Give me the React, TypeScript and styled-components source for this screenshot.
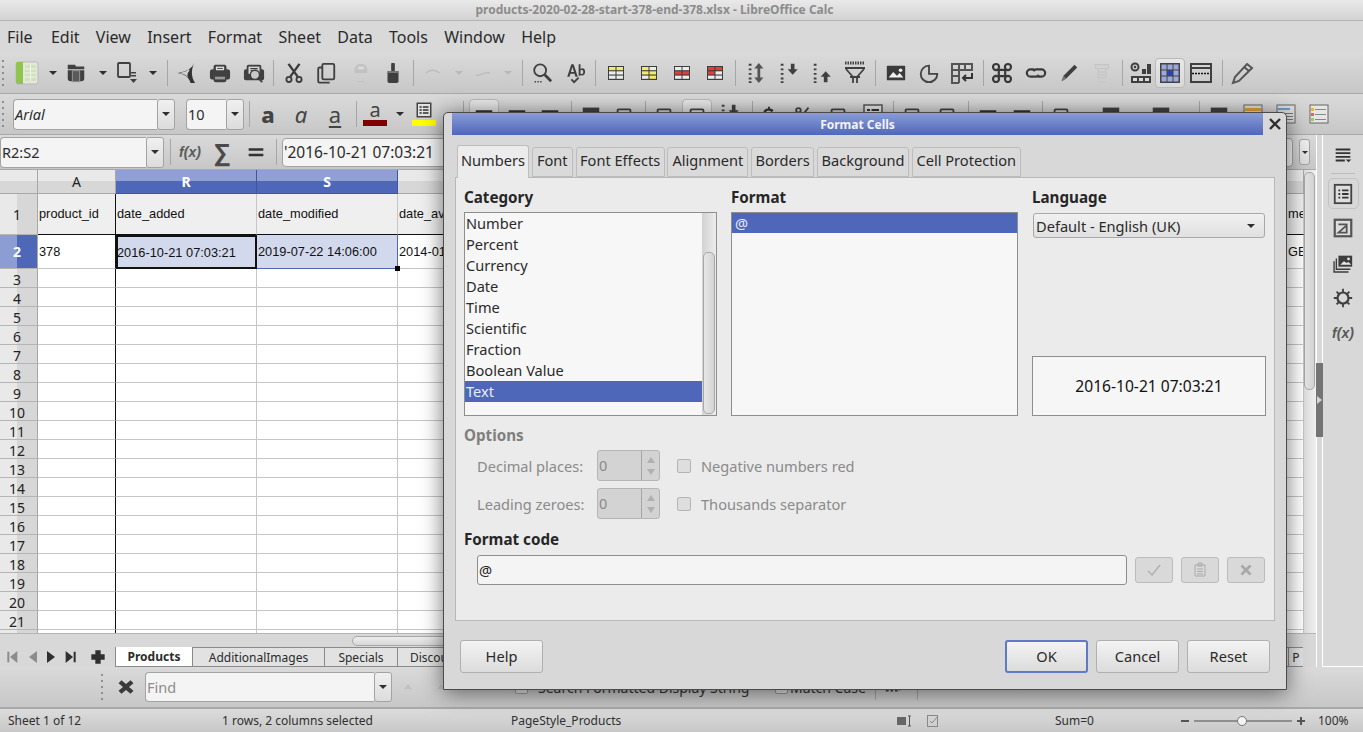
import React from 'react'
import styled, { createGlobalStyle } from 'styled-components'

const GlobalStyle = createGlobalStyle`
  html, body { margin: 0; padding: 0; background: #d8d8d8; }
  body { font-family: "Noto Sans", "Open Sans", sans-serif; color: #2b2b2b; overflow: hidden; }
  * { box-sizing: border-box; }
`

const Window = styled.div`
  position: relative;
  width: 1363px;
  height: 732px;
  display: flex;
  flex-direction: column;
  overflow: hidden;
`
const TitleBar = styled.div`
  height: 21px;
  flex: none;
  background: linear-gradient(#e9e9e9, #d3d3d3);
  border-bottom: 1px solid #b4b4b4;
  color: #8c8c8c;
  font-size: 12px;
  font-weight: 700;
  line-height: 20px;
  text-align: center;
  padding-right: 54px;
`
const MenuBar = styled.div`
  height: 32px;
  flex: none;
  display: flex;
  gap: 16.3px;
  padding-left: 7px;
  align-items: center;
  background: #d9d9d9;
  font-size: 16px;
  color: #2a2a2a;
  span:first-child { margin-right: 2px; }
`
const ToolRow = styled.div<{ $h: number; $start?: number }>`
  height: ${p => p.$h}px;
  flex: none;
  display: flex;
  align-items: center;
  padding-left: ${p => p.$start ?? 0}px;
  background: linear-gradient(#dadada, #c7c7c7);
  border-bottom: 1px solid #a9a9a9;
`
const Slot = styled.div<{ $w: number }>`
  width: ${p => p.$w}px;
  flex: none;
  display: flex;
  align-items: center;
  position: relative;
`
const IconBox = styled.div`
  width: 24px;
  height: 24px;
  flex: none;
  display: flex;
  align-items: center;
  justify-content: center;
`
const Pressed = styled(IconBox)`
  width: 30px;
  height: 30px;
  margin: 0 -3px;
  flex: none;
  border: 1px solid #b9b9b9;
  border-radius: 4px;
  background: linear-gradient(#e8e8e8, #d9d9d9);
`
const Sep = styled.div`
  width: 1px;
  height: 26px;
  flex: none;
  margin-left: 12px;
  background: #a6a6a6;
`
const GripDots = styled.div`
  width: 2px;
  height: 26px;
  flex: none;
  margin-left: 2px;
  background: repeating-linear-gradient(#8f8f8f 0 2px, transparent 2px 6px);
`
const GlyphA = styled.span<{ $bold?: boolean; $italic?: boolean; $under?: boolean }>`
  font-size: 22px;
  line-height: 22px;
  color: #444;
  font-weight: ${p => (p.$bold ? 800 : 400)};
  font-style: ${p => (p.$italic ? 'italic' : 'normal')};
  text-decoration: ${p => (p.$under ? 'underline' : 'none')};
  text-underline-offset: 3px;
`
const ColorChip = styled.div`
  display: flex;
  flex-direction: column;
  align-items: center;
  width: 24px;
  height: 26px;
  line-height: 18px;
  font-size: 20px;
  color: #444;
`
const ChipBar = styled.i<{ $c: string }>`
  display: block;
  width: 24px;
  height: 6px;
  margin-top: 1px;
  flex: none;
  background: ${p => p.$c};
`
const Combo = styled.div<{ $w: number; $h?: number }>`
  width: ${p => p.$w}px;
  height: ${p => p.$h ?? 31}px;
  flex: none;
  display: flex;
`
const ComboInput = styled.div<{ $italic?: boolean; $muted?: boolean; $fs?: number }>`
  flex: 1;
  min-width: 0;
  background: #f4f4f4;
  border: 1px solid #a3a3a3;
  border-right: none;
  border-radius: 4px 0 0 4px;
  padding-left: 1px;
  display: flex;
  align-items: center;
  font-size: ${p => p.$fs ?? 14.5}px;
  font-style: ${p => (p.$italic ? 'italic' : 'normal')};
  color: ${p => (p.$muted ? '#8d8d8d' : '#2b2b2b')};
  white-space: nowrap;
  overflow: hidden;
`
const FormulaInput = styled(ComboInput)`
  border-right: 1px solid #a3a3a3;
  border-radius: 4px;
`
const ComboButton = styled.div`
  width: 18px;
  flex: none;
  background: linear-gradient(#f0f0f0, #dcdcdc);
  border: 1px solid #a3a3a3;
  border-radius: 3px;
  display: flex;
  align-items: center;
  justify-content: center;
`
const FormulaDrop = styled(ComboButton)`
  width: 11px;
  height: 26px;
`
const Caret = styled.i<{ $c?: string; $s?: number }>`
  display: block;
  width: 0;
  height: 0;
  flex: none;
  border-left: ${p => p.$s ?? 4}px solid transparent;
  border-right: ${p => p.$s ?? 4}px solid transparent;
  border-top: ${p => p.$s ?? 4}px solid ${p => p.$c ?? '#2e2e2e'};
`
const Workspace = styled.div`
  flex: none;
  height: 532px;
  display: flex;
`
const Main = styled.div`
  width: 1316px;
  flex: none;
  display: flex;
  flex-direction: column;
`
const FxText = styled.span`
  font-size: 14px;
  font-style: italic;
  font-weight: 700;
  color: #5a5a5a;
  font-family: "Liberation Sans", Arial, sans-serif;
  white-space: nowrap;
`
const SigmaGlyph = styled.span`
  font-size: 24px;
  font-weight: 700;
  color: #4a4a4a;
  line-height: 24px;
`
const GridWrap = styled.div`
  height: 463px;
  flex: none;
  display: flex;
`
const Sheet = styled.div`
  width: 1304px;
  flex: none;
  overflow: hidden;
  position: relative;
  background: #fff;
`
const GridRow = styled.div<{ $h: number }>`
  display: flex;
  height: ${p => p.$h}px;
`
const Corner = styled.div`
  width: 38px;
  flex: none;
  background: linear-gradient(#e9e9e9 11px, #d7d7d7 11px);
  border-right: 1px solid #a8a8a8;
  border-bottom: 1px solid #a8a8a8;
`
const ColHead = styled.div<{ $w: number; $on?: boolean }>`
  width: ${p => p.$w}px;
  flex: none;
  display: flex;
  align-items: center;
  justify-content: center;
  font-size: 14px;
  font-weight: ${p => (p.$on ? 700 : 400)};
  color: ${p => (p.$on ? '#fff' : '#222')};
  background: ${p =>
    p.$on
      ? 'linear-gradient(#909fd5 11px, #4f67b9 11px)'
      : 'linear-gradient(#e9e9e9 11px, #d7d7d7 11px)'};
  border-right: 1px solid ${p => (p.$on ? '#3f56a5' : '#a8a8a8')};
  border-bottom: 1px solid ${p => (p.$on ? '#3f56a5' : '#a8a8a8')};
`
const RowHead = styled.div<{ $on?: boolean; $low?: boolean }>`
  width: 38px;
  flex: none;
  display: flex;
  align-items: center;
  justify-content: center;
  font-size: 14px;
  padding-right: 3px;
  padding-top: ${p => (p.$low ? 2 : 0)}px;
  font-weight: ${p => (p.$on ? 700 : 400)};
  color: ${p => (p.$on ? '#fff' : '#222')};
  background: ${p =>
    p.$on
      ? 'linear-gradient(90deg, #8c9dd4 17px, #4f67b9 17px)'
      : 'linear-gradient(90deg, #e9e9e9 17px, #d7d7d7 17px)'};
  border-right: 1px solid #a8a8a8;
  border-bottom: 1px solid #b5b5b5;
`
const Cell = styled.div<{ $w: number; $head?: boolean; $sel?: boolean; $frozen?: boolean; $under?: boolean }>`
  width: ${p => p.$w}px;
  flex: none;
  display: flex;
  align-items: center;
  padding-left: 1px;
  padding-bottom: ${p => (p.$head ? 2 : 0)}px;
  font-family: "Liberation Sans", Arial, sans-serif;
  font-size: 12.8px;
  color: #111;
  white-space: nowrap;
  overflow: hidden;
  background: ${p => (p.$head ? '#efefef' : p.$sel ? '#d3d9ec' : '#fff')};
  border-right: 1px solid ${p => (p.$frozen ? '#111' : '#c6c6c6')};
  border-bottom: 1px solid ${p => (p.$under ? '#111' : '#c6c6c6')};
`
const ActiveCell = styled(Cell)`
  border: 2px solid #111;
  padding-left: 0;
  text-indent: -1px;
`
const BlueCell = styled(Cell)`
  border-right: 1px solid #4f67b9;
  border-bottom: 1px solid #4f67b9;
`
const FillHandle = styled.i`
  position: absolute;
  left: 395px;
  top: 96px;
  width: 5px;
  height: 5px;
  background: #000;
`
const VScroll = styled.div`
  width: 12px;
  flex: none;
  background: linear-gradient(90deg, #dedede, #efefef);
  padding: 2px 1px 0 0;
`
const VThumb = styled.div`
  height: 218px;
  border: 1px solid #a8a8a8;
  border-radius: 5px;
  background: linear-gradient(90deg, #e6e6e6, #d2d2d2);
`
const HScroll = styled.div`
  height: 14px;
  flex: none;
  padding: 2px 0 2px 352px;
  background: #d8d8d8;
  border-top: 1px solid #b5b5b5;
`
const HThumb = styled.div`
  height: 10px;
  width: 900px;
  border: 1px solid #a8a8a8;
  border-radius: 5px;
  background: linear-gradient(#ececec, #d8d8d8);
`
const TabsRow = styled.div`
  height: 20px;
  flex: none;
  display: flex;
  background: #d8d8d8;
`
const NavArea = styled.div`
  width: 115px;
  flex: none;
  display: flex;
  align-items: center;
`
const NavSlot = styled.div<{ $w: number }>`
  width: ${p => p.$w}px;
  flex: none;
  display: flex;
  justify-content: center;
`
const SheetTab = styled.div<{ $w: number; $on?: boolean; $left?: number }>`
  width: ${p => p.$w}px;
  flex: none;
  display: flex;
  align-items: center;
  justify-content: ${p => (p.$left ? 'flex-start' : 'center')};
  padding-left: ${p => p.$left ?? 0}px;
  overflow: hidden;
  white-space: nowrap;
  font-size: 12px;
  font-weight: ${p => (p.$on ? 700 : 400)};
  background: ${p => (p.$on ? '#fff' : '#e2e2e2')};
  border-left: 1px solid #8a8a8a;
  border-top: ${p => (p.$on ? 'none' : '1px solid #8a8a8a')};
  border-bottom: 1px solid #8a8a8a;
  color: #2b2b2b;
`
const Strip = styled.div`
  width: 7px;
  flex: none;
  display: flex;
  flex-direction: column;
  background: #d8d8d8;
  border-left: 1px solid #fff;
  border-right: 1px solid #fff;
  padding-top: 228px;
`
const Handle = styled.div`
  width: 7px;
  margin-left: -1px;
  height: 74px;
  background: #747474;
  display: flex;
  align-items: center;
`
const HandleArrow = styled.i`
  width: 0;
  height: 0;
  border-top: 4px solid transparent;
  border-bottom: 4px solid transparent;
  border-left: 5px solid #d4d4d4;
  margin-left: 1px;
`
const SideBar = styled.div`
  width: 40px;
  flex: none;
  background: #d8d8d8;
  border-bottom: 1px solid #fff;
  display: flex;
  flex-direction: column;
  align-items: center;
  padding-top: 8px;
`
const SideItem = styled.div<{ $active?: boolean }>`
  width: 31px;
  height: ${p => (p.$active ? 31 : 35)}px;
  margin-bottom: ${p => (p.$active ? 1 : 0)}px;
  display: flex;
  align-items: center;
  justify-content: center;
  border: 1px solid ${p => (p.$active ? '#c3c3c3' : 'transparent')};
  border-radius: 5px;
`
const SideRule = styled.div`
  width: 24px;
  height: 1px;
  background: #bdbdbd;
  margin: 6px 0 4px;
`
const FindCheck = styled.i`
  width: 13px;
  height: 13px;
  display: block;
  background: #e6e6e6;
  border: 1px solid #9c9c9c;
  border-radius: 2px;
`
const FindLabel = styled.span`
  font-size: 14px;
  color: #333;
  white-space: nowrap;
`
const StatusBar = styled.div`
  flex: 1;
  display: flex;
  align-items: center;
  padding-left: 8px;
  background: linear-gradient(#dcdcdc, #c8c8c8);
  border-top: 1px solid #a9a9a9;
  font-size: 12px;
  color: #303030;
  white-space: nowrap;
`
const StatusCell = styled.div<{ $w: number }>`
  width: ${p => p.$w}px;
  flex: none;
  display: flex;
  align-items: center;
`
const ZoomTrack = styled.div`
  position: relative;
  width: 98px;
  height: 2px;
  background: #8f8f8f;
`
const ZoomThumb = styled.i`
  position: absolute;
  left: 43px;
  top: -4px;
  width: 10px;
  height: 10px;
  border-radius: 50%;
  background: #f4f4f4;
  border: 1px solid #777;
`

/* dialog */
const Dialog = styled.div`
  position: absolute;
  left: 443px;
  top: 112px;
  width: 844px;
  height: 578px;
  background: #d8d8d8;
  border: 1px solid #4b4b4b;
  border-radius: 5px 5px 0 0;
  box-shadow: 0 3px 22px rgba(0, 0, 0, 0.55);
  display: flex;
  flex-direction: column;
  font-size: 14.6px;
  color: #2a2a2a;
`
const DlgTitleRow = styled.div`
  height: 22px;
  flex: none;
  display: flex;
  padding-left: 8px;
`
const DlgTitle = styled.div`
  flex: 1;
  background: linear-gradient(#8a9cd8, #4f67b9);
  color: #f3f3f3;
  font-size: 12px;
  font-weight: 700;
  line-height: 23px;
  text-align: center;
`
const DlgClose = styled.div`
  width: 23px;
  flex: none;
  display: flex;
  align-items: center;
  justify-content: center;
`
const TabStrip = styled.div`
  display: flex;
  gap: 2.8px;
  align-items: flex-end;
  height: 42px;
  flex: none;
  padding-left: 13px;
`
const DlgTab = styled.div<{ $w: number; $on?: boolean }>`
  width: ${p => p.$w}px;
  height: ${p => (p.$on ? 33 : 30)}px;
  margin-bottom: ${p => (p.$on ? -1 : 0)}px;
  padding-bottom: ${p => (p.$on ? 5 : 4)}px;
  flex: none;
  display: flex;
  align-items: center;
  justify-content: center;
  background: ${p => (p.$on ? '#ececec' : '#dadada')};
  border: 1px solid #bdbdbd;
  border-bottom: ${p => (p.$on ? 'none' : '1px solid #bdbdbd')};
  border-radius: 3px 3px 0 0;
  position: relative;
  z-index: ${p => (p.$on ? 1 : 0)};
  white-space: nowrap;
`
const Panel = styled.div`
  width: 820px;
  height: 444px;
  flex: none;
  margin-left: 11px;
  padding: 8px 8px 0;
  background: #ebebeb;
  border: 1px solid #b8b8b8;
`
const ThreeCols = styled.div`
  display: grid;
  grid-template-columns: 253px 287px 234px;
  column-gap: 14px;
  height: 230px;
`
const Col = styled.div`
  display: flex;
  flex-direction: column;
  min-height: 0;
`
const Label = styled.div<{ $muted?: boolean }>`
  font-size: 15.2px;
  font-weight: 700;
  line-height: 20px;
  height: 26px;
  padding-top: 1px;
  flex: none;
  color: ${p => (p.$muted ? '#7f7f7f' : '#262626')};
`
const ListBox = styled.div`
  height: 204px;
  flex: none;
  display: flex;
  background: #f7f7f7;
  border: 1px solid #8e8e8e;
`
const ListItems = styled.div`
  flex: 1;
  min-width: 0;
`
const ListItem = styled.div<{ $on?: boolean; $h?: number }>`
  height: ${p => p.$h ?? 21}px;
  line-height: ${p => p.$h ?? 21}px;
  padding-left: 1px;
  background: ${p => (p.$on ? '#4f67b9' : 'transparent')};
  color: ${p => (p.$on ? '#e8ecf8' : '#2a2a2a')};
`
const FormatItem = styled(ListItem)`
  padding-left: 3px;
`
const ListTrack = styled.div`
  width: 14px;
  flex: none;
  padding: 39px 1px 1px 1px;
  background: linear-gradient(90deg, #d2d2d2, #ececec);
`
const ListThumb = styled.div`
  height: 162px;
  border: 1px solid #a8a8a8;
  border-radius: 5px;
  background: linear-gradient(90deg, #e6e6e6, #d4d4d4);
`
const LangSelect = styled.div`
  height: 25px;
  flex: none;
  margin: 1px 0 0 1px;
  width: 232px;
  display: flex;
  align-items: center;
  justify-content: space-between;
  padding: 0 9px 0 2px;
  border: 1px solid #a8a8a8;
  border-radius: 3px;
  background: linear-gradient(#f1f1f1, #e0e0e0);
`
const Preview = styled.div`
  height: 60px;
  flex: none;
  margin-top: 118px;
  display: flex;
  align-items: center;
  justify-content: center;
  font-size: 15.6px;
  background: #f6f6f6;
  border: 1px solid #8e8e8e;
  color: #111;
`
const OptionsLabel = styled(Label)`
  margin-top: 8px;
  height: 26px;
`
const OptionRow = styled.div`
  display: flex;
  align-items: center;
  height: 31px;
  margin-bottom: 7px;
  padding-left: 13px;
  color: #8a8a8a;
`
const OptionName = styled.div`
  width: 120px;
  flex: none;
`
const Spin = styled.div`
  width: 63px;
  height: 31px;
  flex: none;
  display: flex;
  background: #d3d3d3;
  border: 1px solid #b5b5b5;
  border-radius: 3px;
  font-size: 14.5px;
  align-items: stretch;
`
const SpinValue = styled.div`
  flex: 1;
  padding-left: 1px;
  line-height: 28px;
`
const SpinArrows = styled.div`
  width: 18px;
  flex: none;
  border-left: 1px solid #a5a5a5;
  display: flex;
  flex-direction: column;
  align-items: center;
  justify-content: center;
  gap: 6px;
`
const SpinUp = styled.i`
  width: 0;
  height: 0;
  border-left: 4px solid transparent;
  border-right: 4px solid transparent;
  border-bottom: 6px solid #b0b0b0;
`
const SpinDown = styled(SpinUp)`
  transform: rotate(180deg);
`
const CheckBox = styled.i`
  width: 14px;
  height: 14px;
  flex: none;
  margin: 0 10px 0 17px;
  background: #dedede;
  border: 1px solid #b4b4b4;
  border-radius: 2px;
`
const CodeLabel = styled(Label)`
  margin-top: 9px;
  height: 27px;
`
const CodeRow = styled.div`
  display: flex;
  align-items: center;
  gap: 8px;
  padding-left: 13px;
`
const CodeInput = styled.div`
  width: 650px;
  height: 30px;
  flex: none;
  display: flex;
  align-items: center;
  padding-left: 1px;
  background: #f4f4f4;
  border: 1px solid #8e8e8e;
  border-radius: 3px;
  color: #222;
`
const MiniButton = styled.div`
  width: 38px;
  height: 26px;
  flex: none;
  display: flex;
  align-items: center;
  justify-content: center;
  background: #d9d9d9;
  border: 1px solid #bcbcbc;
  border-radius: 3px;
`
const Footer = styled.div`
  flex: 1;
  display: flex;
  justify-content: space-between;
  padding: 19px 16px 0 16px;
`
const FootGroup = styled.div`
  display: flex;
  gap: 8px;
`
const FootButton = styled.div<{ $def?: boolean }>`
  width: 83px;
  height: 33px;
  padding-bottom: 1px;
  display: flex;
  align-items: center;
  justify-content: center;
  border: ${p => (p.$def ? '2px solid #5f78c8' : '1px solid #b0b0b0')};
  border-radius: 3px;
  background: linear-gradient(#f3f3f3, #dcdcdc);
`

const Svg: React.FC<{ children: React.ReactNode; c?: string; size?: number }> = ({ children, c = '#404040', size = 22 }) => (
  <svg width={size} height={size} viewBox="0 0 24 24" fill={c} stroke="none">{children}</svg>
)

const Tbl: React.FC<{ cells: string[] }> = ({ cells }) => (
  <svg width="24" height="24" viewBox="0 0 24 24">
    <rect x="4" y="5" width="16" height="14" fill="#3d3d3d" />
    {[0, 1, 2, 3, 4, 5].map(i => (
      <rect key={i} x={i % 2 ? 12.500 : 5} y={6 + Math.floor(i / 2) * 4.300} width="6.500" height="3.200" fill={cells[i] || '#ececec'} />
    ))}
  </svg>
)

const dim = '#b9b9b9'
const icons: Record<string, React.ReactNode> = {
  doc: (
    <svg width="24" height="24" viewBox="0 0 24 24">
      <rect x="1" y="1" width="22" height="22" rx="2" fill="#e4e6df" stroke="#b9b9b9" />
      <path d="M1 3a2 2 0 0 1 2-2h5v22H3a2 2 0 0 1-2-2z" fill="#8fc44f" />
      <path d="M10 4h11v16H10z" fill="#cfe3b4" />
      <path d="M10 8h11M10 12h11M10 16h11M15.500 4v16" stroke="#f2f2f2" />
    </svg>
  ),
  open: (
    <Svg>
      <path d="M3 3h8l1 2h9v3H3z" />
      <path d="M3 9h18v9a3 3 0 0 1-3 3H6a3 3 0 0 1-3-3z" />
      <rect x="7.500" y="9" width="9" height="13" fill="#9a9a9a" />
      <rect x="8.500" y="10" width="7" height="11" fill="#5a5a5a" />
    </Svg>
  ),
  save: (
    <svg width="22" height="24" viewBox="0 0 22 24" fill="#404040">
      <rect x="2" y="2" width="12" height="14" rx="1" fill="none" stroke="#404040" strokeWidth="1.800" />
      <path d="M15 11h5v1.500h-5zM15 14h5v1.500h-5zM14 18h7l-3.500 4z" />
    </svg>
  ),
  pdf: (
    <Svg c="#333">
      <path d="M21 1C18 7 14 10 3 12c7 1 12 4 14 11h5c-4-6-5-14-1-22z" />
      <path d="M5 12c5-1 8-2 10-4l1 1c-2 3-3 4-2 8-2-3-5-4-9-5z" fill="#d2d2d2" />
    </Svg>
  ),
  print: (
    <Svg>
      <path d="M7 3h10a2 2 0 0 1 2 2v3h1a3 3 0 0 1 3 3v6a2 2 0 0 1-2 2h-2v1a2 2 0 0 1-2 2H7a2 2 0 0 1-2-2v-1H3a2 2 0 0 1-2-2v-6a3 3 0 0 1 3-3h1V5a2 2 0 0 1 2-2z" />
      <path d="M7.500 5h9v4h-9z" fill="#ddd" />
      <path d="M9 6.500h6v1H9z" />
      <path d="M6.500 16h11v3h-11z" fill="#999" />
    </Svg>
  ),
  preview: (
    <Svg>
      <path d="M6 3h12a2 2 0 0 1 2 2v3h1a2 2 0 0 1 2 2v8a2 2 0 0 1-2 2H3a2 2 0 0 1-2-2v-8a2 2 0 0 1 2-2h1V5a2 2 0 0 1 2-2z" />
      <path d="M6 5h12v8H6z" fill="#d5d5d5" />
      <path d="M8 6.500h8v1H8zM8 8.500h8v1H8z" />
      <circle cx="13" cy="14" r="5" fill="#c9c9c9" stroke="#404040" strokeWidth="1.500" />
      <path d="M16 17l5 5" stroke="#404040" strokeWidth="2" />
    </Svg>
  ),
  cut: (
    <svg width="22" height="22" viewBox="0 0 24 24" fill="none" stroke="#3c3c3c" strokeWidth="2.600">
      <path d="M6 2l10 14M18 2L8 16" />
      <circle cx="6.500" cy="19" r="2.800" strokeWidth="2" />
      <circle cx="17.500" cy="19" r="2.800" strokeWidth="2" />
    </svg>
  ),
  copy: (
    <svg width="22" height="22" viewBox="0 0 24 24" fill="none" stroke="#404040" strokeWidth="2">
      <rect x="8" y="2" width="13" height="17" rx="1.500" />
      <path d="M8 6H5a1.500 1.500 0 0 0-1.500 1.500V21a1.500 1.500 0 0 0 1.500 1.500h11" />
    </svg>
  ),
  paste: (
    <Svg c="#c2c2c2">
      <path d="M5 9c0-4 3-7 7-7s7 3 7 7v3H5z" />
      <path d="M9 5h6v3H9z" fill="#dcdcdc" />
      <path d="M8 21h8v1H8z" />
    </Svg>
  ),
  brush: (
    <Svg c="#3f3f3f">
      <rect x="10" y="1" width="4" height="9" rx="1" />
      <path d="M6 10h12v11a2 2 0 0 1-2 2H8a2 2 0 0 1-2-2z" />
      <rect x="6" y="10" width="12" height="2" fill="#777" />
    </Svg>
  ),
  undo: (
    <svg width="24" height="24" viewBox="0 0 24 24" fill="none" stroke="#bdbdbd" strokeWidth="1.500"><path d="M4 12c4-4 8-4 14 0" /></svg>
  ),
  redo: (
    <svg width="24" height="24" viewBox="0 0 24 24" fill="none" stroke="#bdbdbd" strokeWidth="1.500"><path d="M4 14c4 2 8-4 14-2" /></svg>
  ),
  search: (
    <svg width="22" height="22" viewBox="0 0 24 24" fill="none" stroke="#3f3f3f" strokeWidth="2">
      <circle cx="10" cy="9" r="6.500" />
      <path d="M15 14l7 7" strokeWidth="3" />
      <path d="M4 21.500h8" strokeDasharray="1.500 1.500" strokeWidth="1.500" />
    </svg>
  ),
  spell: (
    <svg width="22" height="22" viewBox="0 0 24 24">
      <path d="M6 16h-2.500L8 2.500h2.500L15 16h-2.500l-1-3.200H7zM7.600 11h3.300L9.200 5.500z" fill="#3f3f3f" />
      <path d="M16 2.500h2v5c2.500-1.500 5-.5 5 3s-2.500 5-5 3.800V15h-2zM18 9.200v3.500c1.500 1 3 .5 3-1.800s-1.500-2.700-3-1.700z" fill="#3f3f3f" />
      <path d="M8 19l3 3 5-5" fill="none" stroke="#3f3f3f" strokeWidth="2" />
    </svg>
  ),
  t1: <Tbl cells={['#f4ea6a', '#f4ea6a', '', '', '', '']} />,
  t2: <Tbl cells={['#f4ea6a', '', '#f4ea6a', '#f4ea6a', '', '#f4ea6a']} />,
  t3: <Tbl cells={['', '', '#e43b3b', '#e43b3b', '', '']} />,
  t4: <Tbl cells={['#e43b3b', '#e43b3b', '#e43b3b', '', '', '']} />,
  rowH: (
    <Svg>
      <path d="M14 1l5 6h-3.500v10H19l-5 6-5-6h3.500V7H9z" fill="#555" />
      <path d="M3 2h3v2H3zM3 7h3v2H3zM3 12h3v2H3zM3 17h3v2H3zM3 21h3v2H3z" />
    </Svg>
  ),
  rowDown: (
    <Svg>
      <path d="M14 2h4v6h3.500L16 14l-5.500-6H14z" />
      <path d="M3 2h3v2H3zM3 7h3v2H3zM3 12h3v2H3zM3 17h3v2H3zM3 21h3v2H3z" />
    </Svg>
  ),
  rowUp: (
    <Svg>
      <path d="M18 22h-4v-6h-3.500L16 10l5.500 6H18z" />
      <path d="M3 2h3v2H3zM3 7h3v2H3zM3 12h3v2H3zM3 17h3v2H3zM3 21h3v2H3z" />
    </Svg>
  ),
  filter: (
    <svg width="24" height="24" viewBox="0 0 24 24" fill="none" stroke="#404040" strokeWidth="1.800">
      <path d="M2 2h20" strokeDasharray="1.500 1" strokeWidth="3" />
      <path d="M2 7h20M3 8l7 8v6M21 8l-7 8v6M7 16h10" />
    </svg>
  ),
  image: (
    <Svg c="#3a3a3a">
      <rect x="2" y="4" width="20" height="16" rx="1" />
      <path d="M4 17l5-6 4 4 3-3 4 5z" fill="#f0f0f0" />
      <circle cx="17" cy="9" r="2" fill="#f0f0f0" />
    </Svg>
  ),
  chart: (
    <svg width="22" height="22" viewBox="0 0 24 24" fill="none" stroke="#444" strokeWidth="2">
      <path d="M12 4a9 9 0 1 0 9 9h-9V4z" />
    </svg>
  ),
  pivot: (
    <svg width="24" height="24" viewBox="0 0 24 24" fill="none" stroke="#555" strokeWidth="2">
      <path d="M2 3h20v6H2zM2 3v19h7M9 3v19M15 3v6M2 9h20M2 15h7" />
      <path d="M22 12v5h-8M16 14l-3 3 3 3" stroke="#333" />
    </svg>
  ),
  cmd: (
    <svg width="22" height="22" viewBox="0 0 24 24" fill="none" stroke="#383838" strokeWidth="2.400">
      <circle cx="5.500" cy="5.500" r="3.300" /><circle cx="18.500" cy="5.500" r="3.300" />
      <circle cx="5.500" cy="18.500" r="3.300" /><circle cx="18.500" cy="18.500" r="3.300" />
      <path d="M8.500 8.500h7v7h-7z" />
    </svg>
  ),
  link: (
    <svg width="22" height="22" viewBox="0 0 24 24" fill="none" stroke="#3a3a3a" strokeWidth="2.400">
      <path d="M10 8H6a4 4 0 0 0 0 8h6a4 4 0 0 0 3-2" />
      <path d="M14 16h4a4 4 0 0 0 0-8h-6a4 4 0 0 0-3 2" />
    </svg>
  ),
  pen: (
    <Svg c="#3f3f3f">
      <path d="M18 3l3 3L9 18l-5 3 2-6z" />
      <path d="M4 21l2-6 3 3z" fill="#777" />
    </Svg>
  ),
  note: (
    <svg width="22" height="22" viewBox="0 0 24 24" fill="none" stroke="#c6c6c6" strokeWidth="1.500">
      <path d="M5 3h14v4H5zM8 7v10h8V7M7 22h10M9 11h6M9 14h6" />
    </svg>
  ),
  grid1: (
    <svg width="24" height="24" viewBox="0 0 24 24" fill="#3f3f3f">
      <circle cx="6" cy="6" r="3.500" fill="none" stroke="#3f3f3f" strokeWidth="2" /><circle cx="6" cy="6" r="1.300" />
      <path d="M13 8h4v5h-4zM18 3h4v10h-4zM2 15h20v7H2z" />
      <path d="M4 17h4v3H4zM10 17h4v3h-4zM16 17h4v3h-4z" fill="#d9d9d9" />
    </svg>
  ),
  grid2: (
    <svg width="24" height="24" viewBox="0 0 24 24">
      <rect x="2" y="2" width="20" height="20" fill="#444" />
      {[0, 1, 2].flatMap(r => [0, 1, 2].map(k => (
        <rect key={`${r}${k}`} x={3.500 + k * 6} y={3.500 + r * 6} width="5" height="5" fill={r === 1 && k === 1 ? '#2c43b5' : '#9ba8da'} />
      )))}
    </svg>
  ),
  grid3: (
    <svg width="24" height="24" viewBox="0 0 24 24">
      <rect x="2" y="3" width="20" height="18" fill="none" stroke="#3f3f3f" strokeWidth="2" />
      <path d="M2 7h20" stroke="#3f3f3f" strokeWidth="2" />
      <path d="M3 12.500h18" stroke="#111" strokeWidth="1.500" strokeDasharray="2 1" />
    </svg>
  ),
  pencil: (
    <svg width="24" height="24" viewBox="0 0 24 24" fill="none" stroke="#555" strokeWidth="2">
      <path d="M17 3l5 4L9 20l-6 2 2-6z" />
      <path d="M14 6l5 4" />
    </svg>
  ),
  alignL: <Svg c="#333"><path d="M3 8h18v3H3zM3 13h12v2H3zM3 17h18v2H3z" /></Svg>,
  alignC: <Svg c="#333"><path d="M3 8h18v3H3zM6 13h12v2H6zM3 17h18v2H3z" /></Svg>,
  box: <svg width="22" height="22" viewBox="0 0 24 24" fill="none" stroke="#444" strokeWidth="2"><rect x="5" y="7" width="14" height="14" rx="1" /></svg>,
  dollar: <Svg c="#333"><path d="M11 4h2v2c2 0 3 1 4 2l-2 2c-2-2-6-2-6 0 0 3 9 1 9 6 0 2-2 4-5 4v2h-2v-2c-2 0-4-1-5-3l2-2c2 3 7 3 7 1 0-3-9-1-9-6 0-2 2-4 5-4z" /></Svg>,
  pct: <svg width="22" height="22" viewBox="0 0 24 24" fill="none" stroke="#444" strokeWidth="2"><circle cx="7" cy="8" r="2.500" /><circle cx="17" cy="18" r="2.500" /><path d="M18 5L6 20" /></svg>,
  list: (
    <svg width="24" height="24" viewBox="0 0 24 24">
      <rect x="3" y="3" width="18" height="18" fill="#e3e3e3" stroke="#555" strokeWidth="1.500" />
      <path d="M6 7h3v2H6zM6 11h3v2H6zM6 15h3v2H6zM10.500 7H18v2h-7.500zM10.500 11H18v2h-7.500zM10.500 15H18v2h-7.500z" fill="#333" />
    </svg>
  ),
  listSmall: (
    <svg width="18" height="18" viewBox="0 0 24 24">
      <rect x="3" y="3" width="18" height="18" fill="#e3e3e3" stroke="#444" strokeWidth="2" />
      <path d="M6 7h3v2H6zM6 11h3v2H6zM6 15h3v2H6zM10.500 7H18v2h-7.500zM10.500 11H18v2h-7.500zM10.500 15H18v2h-7.500z" fill="#333" />
    </svg>
  ),
  styled1: <svg width="24" height="24" viewBox="0 0 24 24"><rect x="3" y="3" width="18" height="18" fill="#ddd" stroke="#666" /><path d="M4 6h16v3H4z" fill="#e0a33a" /></svg>,
  styled2: <svg width="24" height="24" viewBox="0 0 24 24"><rect x="3" y="3" width="18" height="18" fill="#ddd" stroke="#666" /><path d="M4 6h12v2H4z" fill="#6f9bd0" /><path d="M6 11h13v1H6zM6 14h13v1H6zM6 17h13v1H6z" fill="#777" /></svg>,
  styled3: <svg width="24" height="24" viewBox="0 0 24 24"><rect x="3" y="3" width="18" height="18" fill="#e6e6e6" stroke="#666" /><path d="M4 6h3v3H4z" fill="#ecb03d" /><path d="M4 11h3v3H4z" fill="#e5605f" /><path d="M4 16h3v3H4z" fill="#9ccc5a" /><path d="M8 7h11v1H8zM8 12h11v1H8zM8 17h11v1H8z" fill="#888" /></svg>,
  dark: <Svg><path d="M3 5h18v5H3z" /><path d="M3 12h18v2H3z" fill="#888" /></Svg>,
  hamburger: <Svg c="#333"><path d="M4 5h16v2H4zM4 9h16v2H4zM4 13h16v2H4zM4 17h10v2H4zM15 17h6l-3 3z" /></Svg>,
  props: (
    <svg width="22" height="22" viewBox="0 0 24 24">
      <rect x="3" y="2" width="18" height="20" fill="#dedede" stroke="#444" strokeWidth="2" />
      <path d="M7 7h2v2H7zM11 7h7v2h-7zM7 11h2v2H7zM11 11h7v2h-7zM7 15h2v2H7zM11 15h7v2h-7z" fill="#333" />
    </svg>
  ),
  style: (
    <svg width="22" height="22" viewBox="0 0 24 24">
      <rect x="3" y="3" width="18" height="18" fill="#dedede" stroke="#555" strokeWidth="2.400" />
      <path d="M7 8h9M7 17l9-8v8z" fill="none" stroke="#555" strokeWidth="2" />
    </svg>
  ),
  gallery: (
    <Svg c="#3d3d3d">
      <path d="M7 4h15v12H7z" />
      <path d="M9 14l4-4 3 2 2-1 3 3z" fill="#e6e6e6" />
      <circle cx="18" cy="7.500" r="1.500" fill="#e6e6e6" />
      <path d="M4 7h1.500v11H20v1.500H4zM1.500 10H3v11h15v1.500H1.500z" />
    </Svg>
  ),
  gear: (
    <svg width="22" height="22" viewBox="0 0 24 24" fill="none" stroke="#3f3f3f">
      <circle cx="12" cy="12" r="6" strokeWidth="2.400" />
      <path d="M12 2v4M12 18v4M2 12h4M18 12h4M5 5l3 3M16 16l3 3M19 5l-3 3M8 16l-3 3" strokeWidth="2" />
    </svg>
  ),
  first: <Svg size={16} c="#8c8c8c"><path d="M5 4h3v16H5zM20 3v18L9 12z" /></Svg>,
  prev: <Svg size={16} c="#8c8c8c"><path d="M18 3v18L6 12z" /></Svg>,
  next: <Svg size={16} c="#2f2f2f"><path d="M6 3v18l12-9z" /></Svg>,
  last: <Svg size={16} c="#2f2f2f"><path d="M16 4h3v16h-3zM4 3v18l11-9z" /></Svg>,
  plus: <Svg size={16} c="#2f2f2f"><path d="M8 2h8v6h6v8h-6v6H8v-6H2V8h6z" /></Svg>,
  x: <Svg size={18} c="#3a3a3a"><path d="M6 3l6 5 6-5 4 4-6 5 6 5-4 4-6-5-6 5-4-4 6-5-6-5z" /></Svg>,
  upDim: <Svg size={14} c="#c2c2c2"><path d="M12 7l7 9H5z" /></Svg>,
  binoc: (
    <svg width="22" height="22" viewBox="0 0 24 24" fill="#444">
      <path d="M2 14h3v3H2zM7 14h3v3H7zM12 14h3v3h-3zM17 7l4 4-4 5-3-3z" />
    </svg>
  ),
}

const Ic = ({ n }: { n: string }) => <IconBox>{icons[n]}</IconBox>
const C = () => <IconBox><Caret /></IconBox>
const S = () => <Sep />

type Item = [number, React.ReactNode]

// each slot spans from its own icon to the next one, icon boxes are 24 wide
const Tools: React.FC<{ items: Item[]; h: number }> = ({ items, h }) => (
  <ToolRow $h={h} $start={items[0][0] - 12}>
    {items.map(([c, node], i) => (
      <Slot key={i} $w={i + 1 < items.length ? items[i + 1][0] - c : 24}>{node}</Slot>
    ))}
  </ToolRow>
)

const row1: Item[] = [
  [12, <GripDots />], [27, <Ic n="doc" />], [53, <C />], [76, <Ic n="open" />], [103, <C />], [127, <Ic n="save" />], [153, <C />],
  [167, <S />], [186, <Ic n="pdf" />], [220, <Ic n="print" />], [254, <Ic n="preview" />], [273, <S />],
  [294, <Ic n="cut" />], [326, <Ic n="copy" />], [361, <Ic n="paste" />], [393, <Ic n="brush" />], [413, <S />],
  [434, <Ic n="undo" />], [459, <IconBox><Caret $c={dim} /></IconBox>], [484, <Ic n="redo" />], [508, <IconBox><Caret $c={dim} /></IconBox>], [522, <S />],
  [542, <Ic n="search" />], [575, <Ic n="spell" />], [595, <S />], [616, <Ic n="t1" />], [649, <Ic n="t2" />], [682, <Ic n="t3" />], [715, <Ic n="t4" />],
  [735, <S />], [757, <Ic n="rowH" />], [789, <Ic n="rowDown" />], [822, <Ic n="rowUp" />], [855, <Ic n="filter" />], [875, <S />],
  [896, <Ic n="image" />], [929, <Ic n="chart" />], [962, <Ic n="pivot" />], [983, <S />], [1002, <Ic n="cmd" />], [1036, <Ic n="link" />], [1069, <Ic n="pen" />], [1102, <Ic n="note" />],
  [1122, <S />], [1141, <Ic n="grid1" />], [1170, <Pressed>{icons.grid2}</Pressed>], [1201, <Ic n="grid3" />], [1222, <S />], [1242, <Ic n="pencil" />],
]

const row2: Item[] = [
  [12, <GripDots />],
  [25, <Combo $w={162}><ComboInput $italic>Arial</ComboInput><ComboButton><Caret /></ComboButton></Combo>],
  [198, <Combo $w={58}><ComboInput>10</ComboInput><ComboButton><Caret /></ComboButton></Combo>],
  [249, <S />], [268, <IconBox><GlyphA $bold>a</GlyphA></IconBox>], [301, <IconBox><GlyphA $italic>a</GlyphA></IconBox>], [335, <IconBox><GlyphA $under>a</GlyphA></IconBox>],
  [356, <S />], [375, <IconBox><ColorChip>a<ChipBar $c="#7f0000" /></ColorChip></IconBox>], [400, <C />],
  [424, <IconBox><ColorChip>{icons.listSmall}<ChipBar $c="#ffff00" /></ColorChip></IconBox>], [463, <S />],
  [484, <Pressed>{icons.alignL}</Pressed>], [517, <Ic n="alignC" />], [550, <Ic n="alignL" />], [571, <S />], [591, <Ic n="dark" />], [624, <Ic n="box" />], [645, <S />],
  [664, <Ic n="box" />], [697, <Pressed>{icons.box}</Pressed>], [730, <Ic n="rowDown" />], [752, <S />], [769, <Ic n="dollar" />], [803, <Ic n="pct" />], [838, <Ic n="box" />], [873, <Ic n="list" />], [893, <S />],
  [912, <Ic n="box" />], [947, <Ic n="box" />], [968, <S />], [988, <Ic n="alignL" />], [1022, <Ic n="alignL" />], [1042, <S />], [1061, <Ic n="box" />], [1111, <Ic n="dark" />], [1161, <Ic n="dark" />], [1199, <S />],
  [1219, <Ic n="dark" />], [1253, <Ic n="styled1" />], [1286, <Ic n="styled2" />], [1319, <Ic n="styled3" />],
]

const formula: Item[] = [
  [12, <Combo $w={164} $h={31}><ComboInput>R2:S2</ComboInput><ComboButton><Caret /></ComboButton></Combo>],
  [170, <S />],
  [190, <IconBox><FxText>f(x)</FxText></IconBox>],
  [222, <IconBox><SigmaGlyph>∑</SigmaGlyph></IconBox>],
  [256, <IconBox><Svg c="#333"><path d="M4 8h16v2.500H4zM4 14h16v2.500H4z" /></Svg></IconBox>],
  [276, <S />],
  [294, <Combo $w={1011} $h={29}><FormulaInput $fs={15.500}>'2016-10-21 07:03:21</FormulaInput></Combo>],
  [1311, <FormulaDrop><Caret $s={3} /></FormulaDrop>],
]

const findItems: Item[] = [
  [111, <GripDots />], [126, <Ic n="x" />],
  [157, <Combo $w={247} $h={30}><ComboInput $muted>Find</ComboInput><ComboButton><Caret /></ComboButton></Combo>],
  [408, <Ic n="upDim" />], [441, <Ic n="upDim" />],
  [521, <IconBox><FindCheck /></IconBox>], [550, <FindLabel>Search Formatted Display String</FindLabel>],
  [781, <IconBox><FindCheck /></IconBox>], [802, <FindLabel>Match Case</FindLabel>],
  [875, <S />], [895, <Ic n="binoc" />], [917, <S />],
]

const cols = [78, 141, 141, 889, 17]
const blankRows = Array.from({ length: 20 }, (_, i) => i + 3)
const categories = ['Number', 'Percent', 'Currency', 'Date', 'Time', 'Scientific', 'Fraction', 'Boolean Value', 'Text']
const dlgTabs: [string, number][] = [['Numbers', 72], ['Font', 41], ['Font Effects', 89], ['Alignment', 81], ['Borders', 63], ['Background', 92], ['Cell Protection', 109]]

const App: React.FC = () => (
  <Window>
    <GlobalStyle />
    <TitleBar>products-2020-02-28-start-378-end-378.xlsx - LibreOffice Calc</TitleBar>
    <MenuBar>
      {['File', 'Edit', 'View', 'Insert', 'Format', 'Sheet', 'Data', 'Tools', 'Window', 'Help'].map(m => <span key={m}>{m}</span>)}
    </MenuBar>
    <Tools items={row1} h={41} />
    <Tools items={row2} h={41} />
    <Workspace>
      <Main>
        <Tools items={formula} h={35} />
        <GridWrap>
          <Sheet>
            <GridRow $h={24}>
              <Corner />
              <ColHead $w={cols[0]}>A</ColHead>
              <ColHead $w={cols[1]} $on>R</ColHead>
              <ColHead $w={cols[2]} $on>S</ColHead>
              <ColHead $w={cols[3] + cols[4]} />
            </GridRow>
            <GridRow $h={41}>
              <RowHead>1</RowHead>
              <Cell $w={cols[0]} $head $frozen $under>product_id</Cell>
              <Cell $w={cols[1]} $head $under>date_added</Cell>
              <Cell $w={cols[2]} $head $under>date_modified</Cell>
              <Cell $w={cols[3]} $head $under>date_available</Cell>
              <Cell $w={cols[4]} $head $under>me</Cell>
            </GridRow>
            <GridRow $h={34}>
              <RowHead $on>2</RowHead>
              <Cell $w={cols[0]} $frozen>378</Cell>
              <ActiveCell $w={cols[1]} $sel>2016-10-21 07:03:21</ActiveCell>
              <BlueCell $w={cols[2]} $sel>2019-07-22 14:06:00</BlueCell>
              <Cell $w={cols[3]}>2014-01-01</Cell>
              <Cell $w={cols[4]}>GE</Cell>
            </GridRow>
            {blankRows.map(n => (
              <GridRow key={n} $h={19}>
                <RowHead $low>{n}</RowHead>
                <Cell $w={cols[0]} $frozen />
                <Cell $w={cols[1]} />
                <Cell $w={cols[2]} />
                <Cell $w={cols[3]} />
                <Cell $w={cols[4]} />
              </GridRow>
            ))}
            <FillHandle />
          </Sheet>
          <VScroll><VThumb /></VScroll>
        </GridWrap>
        <HScroll><HThumb /></HScroll>
        <TabsRow>
          <NavArea>
            <NavSlot $w={24}>{icons.first}</NavSlot>
            <NavSlot $w={18}>{icons.prev}</NavSlot>
            <NavSlot $w={18}>{icons.next}</NavSlot>
            <NavSlot $w={22}>{icons.last}</NavSlot>
            <NavSlot $w={32}>{icons.plus}</NavSlot>
          </NavArea>
          <SheetTab $w={77} $on>Products</SheetTab>
          <SheetTab $w={132}>AdditionalImages</SheetTab>
          <SheetTab $w={73}>Specials</SheetTab>
          <SheetTab $w={891} $left={12}>Discounts</SheetTab>
          <SheetTab $w={15}>P</SheetTab>
        </TabsRow>
      </Main>
      <Strip><Handle><HandleArrow /></Handle></Strip>
      <SideBar>
        <IconBox>{icons.hamburger}</IconBox>
        <SideRule />
        <SideItem $active>{icons.props}</SideItem>
        <SideItem>{icons.style}</SideItem>
        <SideItem>{icons.gallery}</SideItem>
        <SideItem>{icons.gear}</SideItem>
        <SideItem><FxText>f(x)</FxText></SideItem>
      </SideBar>
    </Workspace>
    <Tools items={findItems} h={41} />
    <StatusBar>
      <StatusCell $w={214}>Sheet 1 of 12</StatusCell>
      <StatusCell $w={289}>1 rows, 2 columns selected</StatusCell>
      <StatusCell $w={386}>PageStyle_Products</StatusCell>
      <StatusCell $w={29}>
        <svg width="14" height="12" viewBox="0 0 14 12"><rect x="0" y="2" width="9" height="8" fill="#666" /><path d="M11 1h3M12.500 1v10M11 11h3" stroke="#555" fill="none" /></svg>
      </StatusCell>
      <StatusCell $w={129}>
        <svg width="14" height="14" viewBox="0 0 14 14" fill="none" stroke="#888"><rect x="1.500" y="1.500" width="10" height="11" /><path d="M4 7l2 2 6-7" /></svg>
      </StatusCell>
      <StatusCell $w={125}>Sum=0</StatusCell>
      <StatusCell $w={14}>
        <svg width="10" height="10" viewBox="0 0 10 10"><path d="M1 4h8v2H1z" fill="#555" /></svg>
      </StatusCell>
      <StatusCell $w={102}><ZoomTrack><ZoomThumb /></ZoomTrack></StatusCell>
      <StatusCell $w={22}>
        <svg width="10" height="10" viewBox="0 0 10 10"><path d="M4 1h2v3h3v2H6v3H4V6H1V4h3z" fill="#555" /></svg>
      </StatusCell>
      <span>100%</span>
    </StatusBar>

    <Dialog>
      <DlgTitleRow>
        <DlgTitle>Format Cells</DlgTitle>
        <DlgClose>
          <svg width="12" height="12" viewBox="0 0 12 12"><path d="M1 1l10 10M11 1L1 11" stroke="#2f2f2f" strokeWidth="2.400" /></svg>
        </DlgClose>
      </DlgTitleRow>
      <TabStrip>
        {dlgTabs.map(([t, w], i) => <DlgTab key={t} $w={w} $on={i === 0}>{t}</DlgTab>)}
      </TabStrip>
      <Panel>
        <ThreeCols>
          <Col>
            <Label>Category</Label>
            <ListBox>
              <ListItems>
                {categories.map(c => <ListItem key={c} $on={c === 'Text'}>{c}</ListItem>)}
              </ListItems>
              <ListTrack><ListThumb /></ListTrack>
            </ListBox>
          </Col>
          <Col>
            <Label>Format</Label>
            <ListBox>
              <ListItems><FormatItem $on $h={20}>@</FormatItem></ListItems>
            </ListBox>
          </Col>
          <Col>
            <Label>Language</Label>
            <LangSelect>Default - English (UK)<Caret $s={4.500} /></LangSelect>
            <Preview>2016-10-21 07:03:21</Preview>
          </Col>
        </ThreeCols>
        <OptionsLabel $muted>Options</OptionsLabel>
        <OptionRow>
          <OptionName>Decimal places:</OptionName>
          <Spin><SpinValue>0</SpinValue><SpinArrows><SpinUp /><SpinDown /></SpinArrows></Spin>
          <CheckBox />Negative numbers red
        </OptionRow>
        <OptionRow>
          <OptionName>Leading zeroes:</OptionName>
          <Spin><SpinValue>0</SpinValue><SpinArrows><SpinUp /><SpinDown /></SpinArrows></Spin>
          <CheckBox />Thousands separator
        </OptionRow>
        <CodeLabel>Format code</CodeLabel>
        <CodeRow>
          <CodeInput>@</CodeInput>
          <MiniButton>
            <svg width="16" height="14" viewBox="0 0 16 14" fill="none" stroke="#b0b0b0" strokeWidth="1.500"><path d="M2 8l4 4 8-10" /></svg>
          </MiniButton>
          <MiniButton>
            <svg width="14" height="16" viewBox="0 0 14 16" fill="none" stroke="#aaa"><path d="M2 3h10v11H2zM5 1h4v3H5zM4 7h6M4 9.500h6M4 12h6" /></svg>
          </MiniButton>
          <MiniButton>
            <svg width="12" height="12" viewBox="0 0 12 12"><path d="M1.500 1.500l9 9M10.500 1.500l-9 9" stroke="#a8a8a8" strokeWidth="2.600" /></svg>
          </MiniButton>
        </CodeRow>
      </Panel>
      <Footer>
        <FootButton>Help</FootButton>
        <FootGroup>
          <FootButton $def>OK</FootButton>
          <FootButton>Cancel</FootButton>
          <FootButton>Reset</FootButton>
        </FootGroup>
      </Footer>
    </Dialog>
  </Window>
)

export default App
